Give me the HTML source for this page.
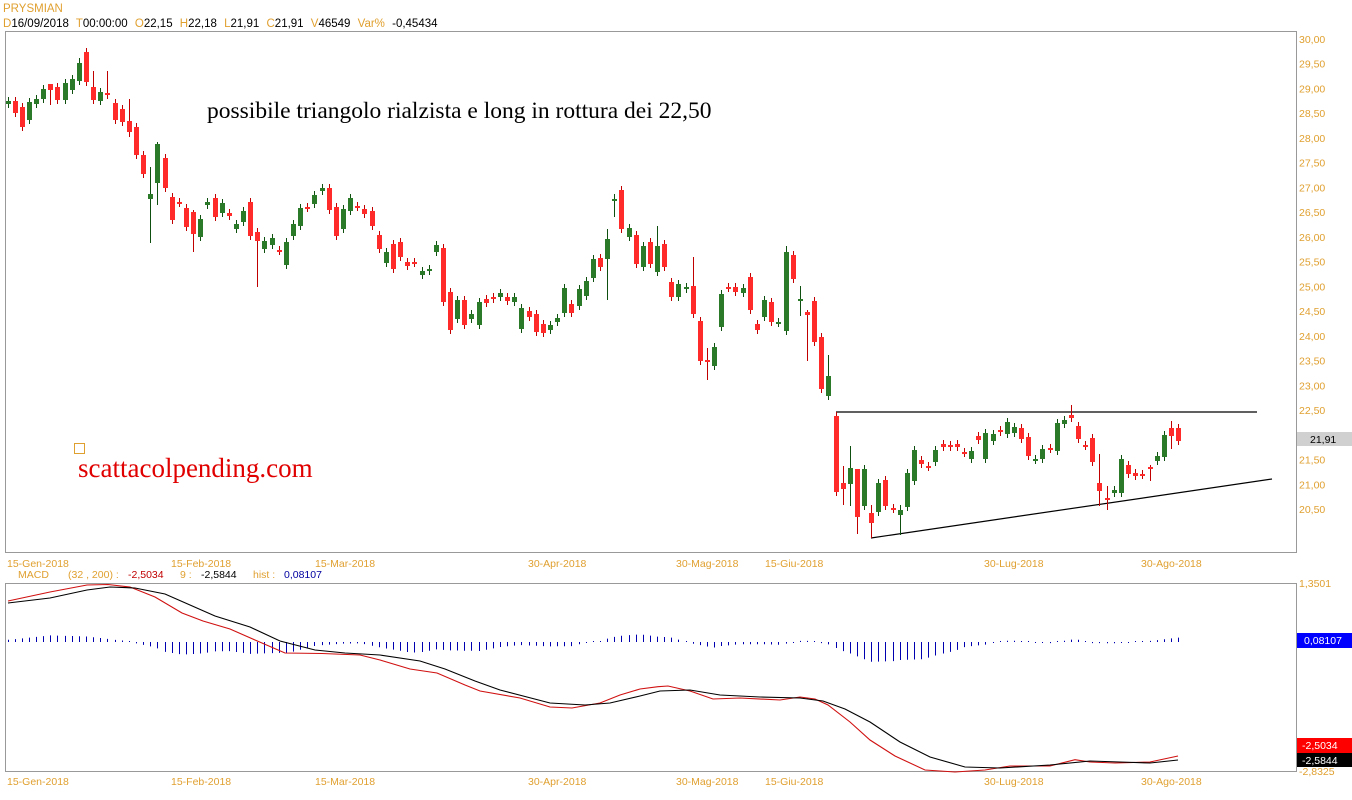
<!DOCTYPE html>
<html><head><meta charset="utf-8"><style>
html,body{margin:0;padding:0;background:#fff;width:1352px;height:800px;overflow:hidden}
svg{display:block}
.ax{font-family:"Liberation Sans",Arial,sans-serif;font-size:10.5px;fill:#E0A030}
.hd{font-family:"Liberation Sans",Arial,sans-serif;font-size:11.5px}
</style></head><body>
<svg id="s" width="1352" height="800" xmlns="http://www.w3.org/2000/svg">
<rect x="5.5" y="31.5" width="1291" height="521" fill="#fff" stroke="#999"/>
<rect x="5.5" y="583.5" width="1291" height="188" fill="#fff" stroke="#999"/>
<text x="3" y="12" class="hd" fill="#E0A030">PRYSMIAN</text>
<text x="3" y="27" class="hd" style="word-spacing:4px"><tspan fill="#E0A030">D</tspan><tspan fill="#000">16/09/2018 </tspan><tspan fill="#E0A030"> T</tspan><tspan fill="#000">00:00:00 </tspan><tspan fill="#E0A030"> O</tspan><tspan fill="#000">22,15 </tspan><tspan fill="#E0A030"> H</tspan><tspan fill="#000">22,18 </tspan><tspan fill="#E0A030"> L</tspan><tspan fill="#000">21,91 </tspan><tspan fill="#E0A030"> C</tspan><tspan fill="#000">21,91 </tspan><tspan fill="#E0A030"> V</tspan><tspan fill="#000">46549 </tspan><tspan fill="#E0A030"> Var% </tspan><tspan fill="#000">-0,45434</tspan></text>
<text x="207" y="118" font-family="'Liberation Serif',serif" font-size="23.5" fill="#000">possibile triangolo rialzista e long in rottura dei 22,50</text>
<rect x="74.5" y="443.5" width="10" height="10" fill="none" stroke="#E0A030"/>
<text x="78" y="477" font-family="'Liberation Serif',serif" font-size="27" fill="#E00000">scattacolpending.com</text>
<line x1="836" y1="412" x2="1257" y2="412" stroke="#000" stroke-width="1.2"/>
<line x1="871" y1="538" x2="1272" y2="479" stroke="#000" stroke-width="1.2"/>
<g id="c"></g>
<g id="h"></g>
<g id="ax"></g>
<polyline id="rl" fill="none" stroke="#D01010" stroke-width="1.1"/>
<polyline id="bl" fill="none" stroke="#000" stroke-width="1.1"/>
<text x="68" y="578" class="ax">(32 , 200) :</text>
<text x="18" y="578" class="ax">MACD</text>
<text x="128" y="578" class="ax" style="fill:#C00000">-2,5034</text>
<text x="180" y="578" class="ax">9 :</text>
<text x="201" y="578" class="ax" style="fill:#000">-2,5844</text>
<text x="253" y="578" class="ax">hist :</text>
<text x="284" y="578" class="ax" style="fill:#0000A0">0,08107</text>
<rect x="1297" y="432" width="55" height="14" fill="#d0d0d0"/>
<text x="1310" y="443" class="ax" style="fill:#000">21,91</text>
<text x="1299" y="587" class="ax">1,3501</text>
<rect x="1297" y="633" width="55" height="15" fill="#0000FF"/>
<text x="1304" y="644" class="ax" style="fill:#fff">0,08107</text>
<rect x="1297" y="738" width="55" height="15" fill="#FF0000"/>
<text x="1302" y="749" class="ax" style="fill:#fff">-2,5034</text>
<rect x="1297" y="753" width="55" height="14" fill="#000"/>
<text x="1302" y="764" class="ax" style="fill:#fff">-2,5844</text>
<text x="1299" y="775" class="ax">-2,8325</text>
</svg>
<script>
var NS="http://www.w3.org/2000/svg";
function el(p,t,a){var e=document.createElementNS(NS,t);for(var k in a)e.setAttribute(k,a[k]);p.appendChild(e);return e;}
var D=[[8,101,104,'g'],[15,101,113,'r'],[22,107,127,'r'],[29,102,120,'g'],[36,99,104,'g'],[43,89,99,'g'],[50,84,90,'r',84,105],[57,87,100,'r'],[65,83,100,'g'],[72,79,90,'g'],[79,63,81,'g',58],[86,52,82,'r'],[93,87,100,'r',71],[100,92,101,'g'],[107,93,95,'r',71],[115,103,120,'r'],[122,109,122,'r'],[129,121,132,'r',99,137],[136,127,155,'r'],[143,155,174,'r'],[150,194,199,'g',167,243],[157,144,183,'g',142,205],[165,158,188,'r'],[172,197,220,'r'],[179,202,203,'r'],[186,208,227,'r'],[193,212,234,'r',210,252],[200,219,237,'g'],[207,202,205,'g'],[215,198,217,'r'],[222,203,213,'g'],[229,213,216,'r'],[236,224,229,'g'],[243,211,222,'g'],[250,202,236,'r'],[257,232,241,'r',228,287],[264,241,249,'g'],[272,238,245,'g'],[279,250,251,'r'],[286,242,265,'g'],[293,224,236,'g'],[300,208,226,'g'],[307,207,208,'r'],[314,195,204,'g'],[322,188,191,'g'],[329,188,210,'r'],[336,207,236,'r'],[343,209,229,'g'],[350,198,211,'g'],[357,206,207,'r'],[364,209,214,'r'],[372,211,226,'r'],[379,235,249,'r'],[386,252,263,'g'],[393,244,269,'r'],[400,242,257,'r'],[407,262,266,'r'],[414,262,263,'r'],[422,271,275,'g'],[429,269,271,'g'],[436,245,252,'g'],
[443,248,302,'r'],[450,292,330,'r'],[457,300,319,'g'],[464,300,325,'r'],[471,314,319,'g'],[479,302,325,'g'],[486,299,303,'r'],[493,297,299,'r'],[500,293,297,'g'],[507,297,301,'r'],[514,297,302,'g'],[521,308,329,'g'],[529,311,317,'r'],[536,314,332,'r'],[543,324,333,'r'],[550,325,330,'g'],[557,318,322,'g'],[564,288,313,'g'],[571,304,313,'r'],[579,289,306,'g'],[586,281,296,'g'],[593,259,278,'g'],[600,258,267,'r'],[607,239,259,'g',229,300],[614,199,201,'g',194,217],[621,190,229,'r'],[629,228,237,'g'],[636,235,264,'r'],[643,246,267,'g'],[650,242,264,'r'],[657,246,272,'g',226],[664,244,267,'r'],[671,282,297,'r'],[678,284,297,'g'],[686,287,289,'g'],[693,286,314,'r',257],[700,321,361,'r'],[707,360,361,'r',348,380],[714,347,366,'g'],[721,294,327,'g'],[728,287,288,'r'],[735,287,292,'r'],[743,288,293,'g'],[750,277,310,'r'],[757,324,330,'r'],[764,300,317,'g'],[771,302,322,'r'],[778,322,323,'g'],[786,252,331,'g',246],[793,255,279,'r'],[800,299,300,'g',286,316],[807,312,315,'r',310,361],[814,301,342,'r'],[821,337,389,'r'],[828,376,396,'g',355],
[836,416,492,'r'],[843,483,489,'r',466,505],[850,468,484,'g',446,506],[857,469,517,'r',469,534],[864,469,506,'g'],[871,513,523,'r',505,538],[878,483,512,'g'],[885,480,506,'r'],[893,508,509,'r'],[900,510,515,'g',505,535],[907,473,507,'g'],[914,450,481,'g'],[921,460,464,'r'],[928,466,467,'r'],[935,450,462,'g'],[943,444,447,'r'],[950,445,447,'r'],[957,444,447,'r'],[964,452,453,'r'],[971,451,459,'g'],[978,436,440,'r'],[985,433,459,'g'],[993,434,441,'g'],[1000,430,432,'r'],[1007,422,434,'g'],[1014,427,433,'g'],[1021,428,439,'r'],[1028,437,456,'r'],[1035,459,460,'g'],[1042,449,459,'g'],[1050,448,449,'r'],[1057,423,451,'g'],[1064,420,424,'g'],[1071,415,418,'r',405],[1078,426,439,'r'],[1085,445,446,'r'],[1092,438,462,'r'],[1099,483,491,'r',454,506],[1107,498,499,'r',486,510],[1114,490,493,'g'],[1121,459,493,'g'],[1128,465,474,'r'],[1135,473,476,'r'],[1142,474,475,'r'],[1150,467,468,'r',465,481],[1157,456,461,'g'],[1164,435,457,'g'],[1171,428,436,'r',421,449],[1178,428,441,'r']];
var g=document.getElementById('c');
D.forEach(function(d){var x=d[0],t=d[1],b=d[2],r=d[3]=='r';var hi=d[4]||t-4,lo=d[5]||b+4;
el(g,'line',{x1:x+.5,x2:x+.5,y1:hi,y2:lo,stroke:r?'#C00000':'#0E4E0E','stroke-width':1});
el(g,'rect',{x:x-2,y:t,width:5,height:Math.max(2,b-t),fill:r?'#FF2A2A':'#2A7A2A'});});
var ax=document.getElementById('ax');
for(var i=0;i<20;i++){var v=(30-i*0.5).toFixed(2).replace('.',',');el(ax,'text',{x:1299,y:43+i*24.74,'class':'ax'}).textContent=v;}
var dl=[[7,'15-Gen-2018'],[171,'15-Feb-2018'],[315,'15-Mar-2018'],[528,'30-Apr-2018'],[676,'30-Mag-2018'],[765,'15-Giu-2018'],[984,'30-Lug-2018'],[1141,'30-Ago-2018']];
dl.forEach(function(d){el(ax,'text',{x:d[0],y:567,'class':'ax'}).textContent=d[1];el(ax,'text',{x:d[0],y:785,'class':'ax'}).textContent=d[1];});
var R=[[8,601],[50,592],[87,585],[108,584.5],[130,587],[155,597],[182,613],[203,621],[230,629],[255,640],[285,653],[322,653.5],[360,655],[380,660],[410,669],[437,673],[465,685],[480,691],[520,698],[550,707],[572,708],[600,703],[620,695],[640,689],[658,686.7],[668,686],[690,691],[713,699],[740,698],[780,700],[800,697],[815,699],[828,705],[850,722],[870,740],[895,756],[925,770],[955,772],[985,770],[1010,766],[1050,766],[1075,759.7],[1090,762],[1115,763],[1150,762],[1178,756]];
var B=[[8,603],[50,598],[87,590],[110,587],[135,588],[165,594],[190,605],[215,616],[250,627],[280,641],[315,650],[345,653],[380,655],[420,661],[445,669],[475,681],[500,690],[550,703],[585,705],[610,703],[640,696],[660,691],[690,690],[720,695],[760,697],[800,698],[823,701],[845,709],[870,722],[900,742],[930,757],[965,767],[1000,768],[1050,765],[1090,761],[1120,762],[1150,763],[1178,760]];
function pts(a){return a.map(function(p){return p[0]+','+p[1]}).join(' ');}
document.getElementById('rl').setAttribute('points',pts(R));
document.getElementById('bl').setAttribute('points',pts(B));
function itp(a,x){for(var i=1;i<a.length;i++){if(x<=a[i][0]){var p=a[i-1],q=a[i];return p[1]+(q[1]-p[1])*(x-p[0])/(q[0]-p[0]);}}return a[a.length-1][1];}
var h=document.getElementById('h');
D.forEach(function(d){var x=d[0];var v=(itp(B,x)-itp(R,x))*1.1;if(Math.abs(v)<1)v=v<0?-1:1;
el(h,'line',{x1:x+.5,x2:x+.5,y1:642,y2:642-v,stroke:'#0000B0','stroke-width':1});});
</script>
</body></html>
